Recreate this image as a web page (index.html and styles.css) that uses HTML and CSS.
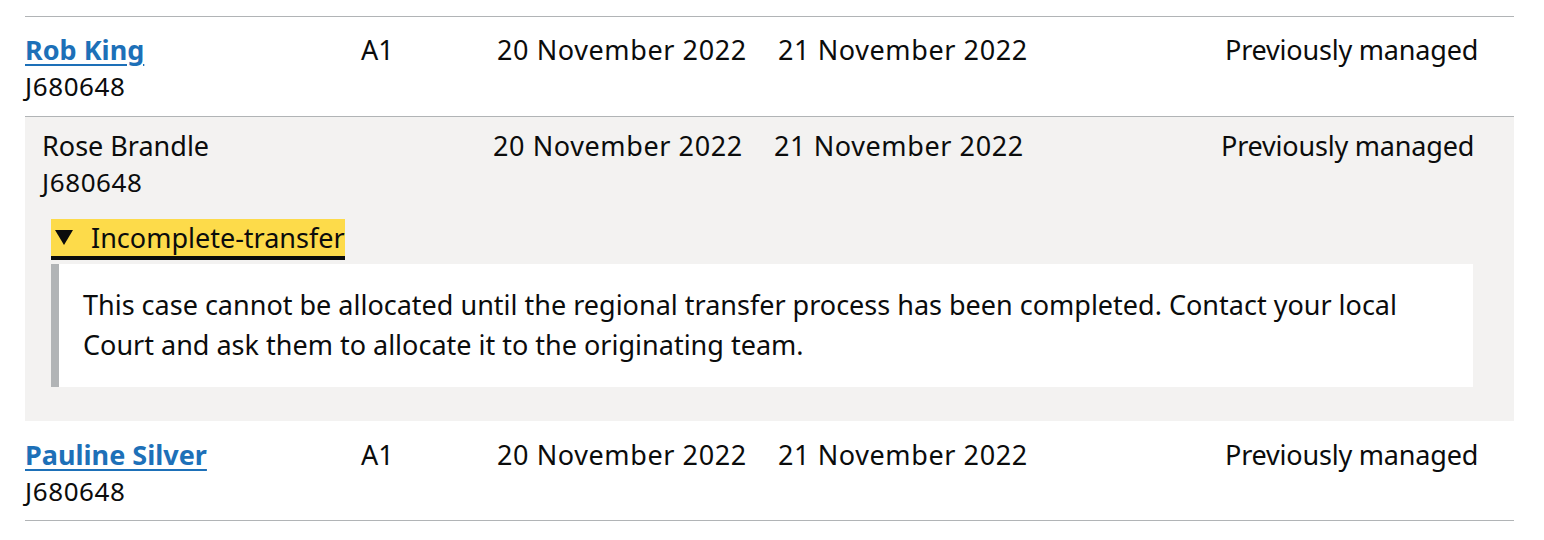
FILE: index.html
```html
<!DOCTYPE html>
<html lang="en">
<head>
<meta charset="utf-8">
<title>Cases</title>
<link rel="stylesheet" href="styles.css">
</head>
<body>
<div class="table">
  <div class="row">
    <div class="cell"><a class="link" href="#">Rob King</a><div class="crn">J680648</div></div>
    <div class="cell">A1</div>
    <div class="cell date">20 November 2022</div>
    <div class="cell date">21 November 2022</div>
    <div class="cell status">Previously managed</div>
  </div>
  <div class="row-expanded">
    <div class="row-inner">
      <div class="cell">Rose Brandle<div class="crn">J680648</div></div>
      <div class="cell date">20 November 2022</div>
      <div class="cell date">21 November 2022</div>
      <div class="cell status">Previously managed</div>
    </div>
    <div class="details">
      <div class="summary"><svg class="arrow" width="18" height="15" viewBox="0 0 18 15"><polygon points="0,0 18,0 9,15" fill="#0b0c0c"/></svg><span class="summary-text">Incomplete-transfer</span></div>
      <div class="details-text">This case cannot be allocated until the regional transfer process has been completed. Contact your local Court and ask them to allocate it to the originating team.</div>
    </div>
  </div>
  <div class="row row-last">
    <div class="cell"><a class="link" href="#">Pauline Silver</a><div class="crn">J680648</div></div>
    <div class="cell">A1</div>
    <div class="cell date">20 November 2022</div>
    <div class="cell date">21 November 2022</div>
    <div class="cell status">Previously managed</div>
  </div>
</div>
</body>
</html>
```
FILE: styles.css
```css
body {
  margin: 0;
  background: #ffffff;
  font-family: "Noto Sans", "Liberation Sans", sans-serif;
  color: #0b0c0c;
  font-size: 27px;
  line-height: 36px;
}
.table {
  margin: 16px 0 0 25px;
  width: 1489px;
  border-top: 1px solid #b1b4b6;
}
.row {
  display: grid;
  grid-template-columns: 336px 136px 281px 447px 1fr;
  padding: 15px 0 12px 0;
  border-bottom: 1px solid #b1b4b6;
}
.row-last {
  padding: 16px 0 11px 0;
}
.date {
  letter-spacing: 0.6px;
  white-space: nowrap;
}
.status {
  white-space: nowrap;
  letter-spacing: -0.2px;
}
.link {
  color: #1d70b8;
  font-weight: 700;
  text-decoration: underline;
  text-decoration-thickness: 2px;
  text-underline-offset: 4px;
}
.crn {
  font-size: 26px;
  letter-spacing: 0.6px;
}
.row-expanded {
  background: #f3f2f1;
  padding: 11px 41px 34px 17px;
}
.row-inner {
  display: grid;
  grid-template-columns: 451px 281px 447px 1fr;
}
.details {
  margin: 17px 0 0 9px;
}
.summary {
  display: inline-flex;
  align-items: center;
  background: #fddb4a;
  box-shadow: 0 4px 0 #0b0c0c;
  height: 37px;
  padding-left: 4px;
  padding-right: 0;
}
.arrow {
  margin-right: 18px;
}
.details-text {
  margin-top: 8px;
  background: #ffffff;
  border-left: 8px solid #b1b4b6;
  padding: 21px 60px 22px 24px;
  line-height: 40px;
}
```
